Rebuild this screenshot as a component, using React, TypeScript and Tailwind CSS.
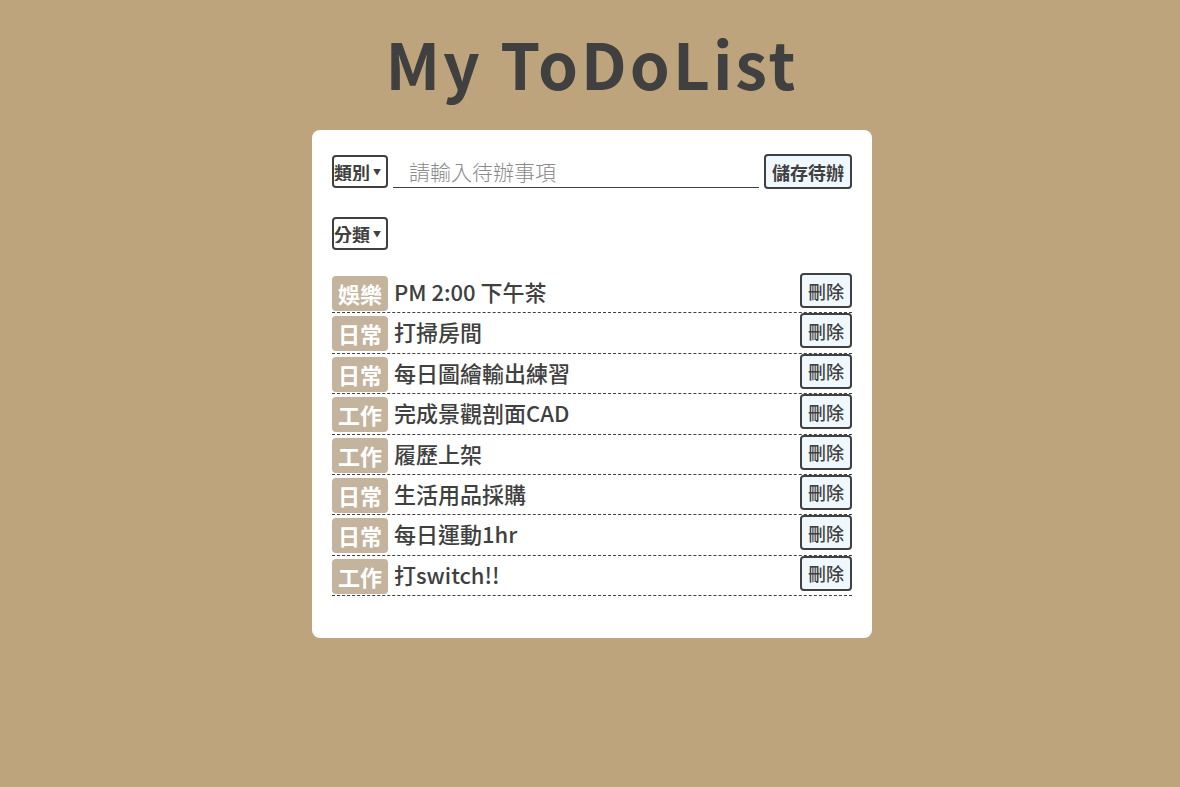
import { useState } from 'react';

const todos = [
  { tag: '娛樂', text: 'PM 2:00 下午茶' },
  { tag: '日常', text: '打掃房間' },
  { tag: '日常', text: '每日圖繪輸出練習' },
  { tag: '工作', text: '完成景觀剖面CAD' },
  { tag: '工作', text: '履歷上架' },
  { tag: '日常', text: '生活用品採購' },
  { tag: '日常', text: '每日運動1hr' },
  { tag: '工作', text: '打switch!!' },
];

const Select = ({ label }: { label: string }) => (
  <div className="relative shrink-0">
    <select className="appearance-none w-[56px] h-[33px] border-2 border-[#404040] rounded-[4px] bg-white pl-0 pr-[14px] text-[18px] font-bold text-[#404040] leading-none outline-none">
      <option>{label}</option>
      <option>日常</option>
      <option>工作</option>
      <option>娛樂</option>
    </select>
    <span className="pointer-events-none absolute right-[7px] top-[13px] text-[8px] leading-none text-[#404040]">▼</span>
  </div>
);

const App = () => {
  const [items, setItems] = useState(todos);
  const [value, setValue] = useState('');

  return (
    <div
      className="min-h-screen bg-[#bea47c] pt-[22px] pl-[4px] text-[#404040]"
      style={{ fontFamily: '"Noto Sans CJK TC", "Noto Sans", sans-serif' }}
    >
      <h1 className="text-center text-[64px] font-bold leading-[80px] tracking-[3px] text-[#404040]">
        My ToDoList
      </h1>

      <div className="mx-auto mt-[28px] w-[560px] rounded-[8px] bg-white px-5 pt-6 pb-[42px]">
        {/* input row */}
        <div className="flex h-[35px] items-center gap-[5px]">
          <Select label="類別" />
          <input
            value={value}
            onChange={(e) => setValue(e.target.value)}
            placeholder="請輸入待辦事項"
            className="h-[33px] min-w-0 flex-1 border-b border-[#404040] px-4 text-[21px] font-light text-[#404040] outline-none placeholder:text-[#8a8a8a]"
          />
          <button
            onClick={() => {
              if (!value) return;
              setItems([...items, { tag: '日常', text: value }]);
              setValue('');
            }}
            className="h-[35px] shrink-0 rounded-[4px] border-2 border-[#404040] bg-[#f0f8ff] px-[6px] text-[18px] font-bold leading-none"
          >
            儲存待辦
          </button>
        </div>

        {/* filter */}
        <div className="mt-[28px] flex">
          <Select label="分類" />
        </div>

        {/* list */}
        <ul className="mt-[23px]">
          {items.map((item, i) => (
            <li
              key={i}
              className="flex h-[40.4px] items-start border-b border-dashed border-[#404040]"
            >
              <span className="mt-[3px] rounded-[4px] bg-[#c4b39d] px-[6px] text-[22px] font-bold leading-[35px] text-white">
                {item.tag}
              </span>
              <span className="ml-[6px] flex-1 text-[22px] font-medium leading-[37px]">
                {item.text}
              </span>
              <button
                onClick={() => setItems(items.filter((_, j) => j !== i))}
                className="h-[35px] shrink-0 rounded-[4px] border-2 border-[#404040] bg-[#f0f8ff] px-[6px] text-[18px] font-medium leading-none"
              >
                刪除
              </button>
            </li>
          ))}
        </ul>
      </div>
    </div>
  );
};

export default App;
